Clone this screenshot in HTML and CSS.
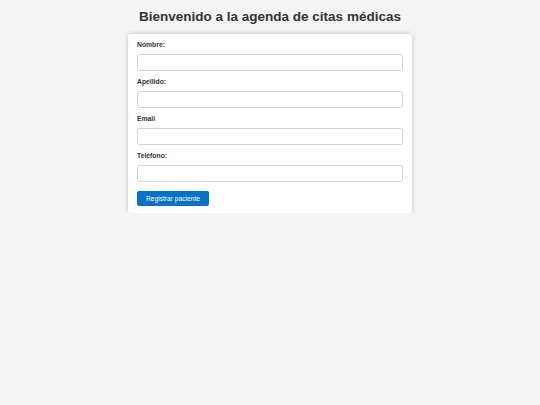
FILE: index.html
```html
<!DOCTYPE html>
<html lang="es">
<head>
<meta charset="utf-8">
<title>Agenda de citas médicas</title>
<link rel="stylesheet" href="styles.css">
</head>
<body>
<h1 class="title">Bienvenido a la agenda de citas médicas</h1>
<form class="card">
  <div class="field">
    <label class="label" for="nombre">Nombre:</label>
    <input class="input" id="nombre" type="text">
  </div>
  <div class="field">
    <label class="label" for="apellido">Apellido:</label>
    <input class="input" id="apellido" type="text">
  </div>
  <div class="field">
    <label class="label" for="email">Email</label>
    <input class="input" id="email" type="email">
  </div>
  <div class="field field-last">
    <label class="label" for="telefono">Teléfono:</label>
    <input class="input" id="telefono" type="tel">
  </div>
  <button class="btn" type="button">Registrar paciente</button>
</form>
</body>
</html>
```
FILE: styles.css
```css
html, body {
  margin: 0;
  padding: 0;
}
body {
  background: #f4f4f4;
  font-family: "Liberation Sans", Arial, sans-serif;
  color: #333;
}
.title {
  margin: 9px 0 9.7px;
  font-size: 13.5px;
  line-height: normal;
  font-weight: bold;
  text-align: center;
  color: #333;
}
.card {
  display: flex;
  flex-direction: column;
  align-items: flex-start;
  box-sizing: border-box;
  width: 284px;
  margin: 0 auto;
  padding: 7px 9px 7px;
  background: #fff;
  border-radius: 2px;
  box-shadow: 0 0 5px rgba(0, 0, 0, 0.22);
}
.field {
  display: flex;
  flex-direction: column;
  width: 100%;
  margin-bottom: 7px;
}
.field-last {
  margin-bottom: 9px;
}
.label {
  font-size: 6.8px;
  font-weight: bold;
  line-height: 8px;
  height: 8px;
  color: #333;
  margin-bottom: 5px;
}
.input {
  box-sizing: border-box;
  width: 100%;
  height: 17px;
  margin: 0;
  padding: 0 5px;
  border: 1px solid #d4d4d4;
  border-radius: 2.5px;
  background: #fff;
  font-family: inherit;
  font-size: 6.67px;
}
.btn {
  height: 15px;
  padding: 0 9px;
  border: none;
  border-radius: 2px;
  background: #0672c4;
  color: #fff;
  font-family: "Liberation Sans", Arial, sans-serif;
  font-size: 6.67px;
  line-height: 15px;
  cursor: pointer;
}
```
